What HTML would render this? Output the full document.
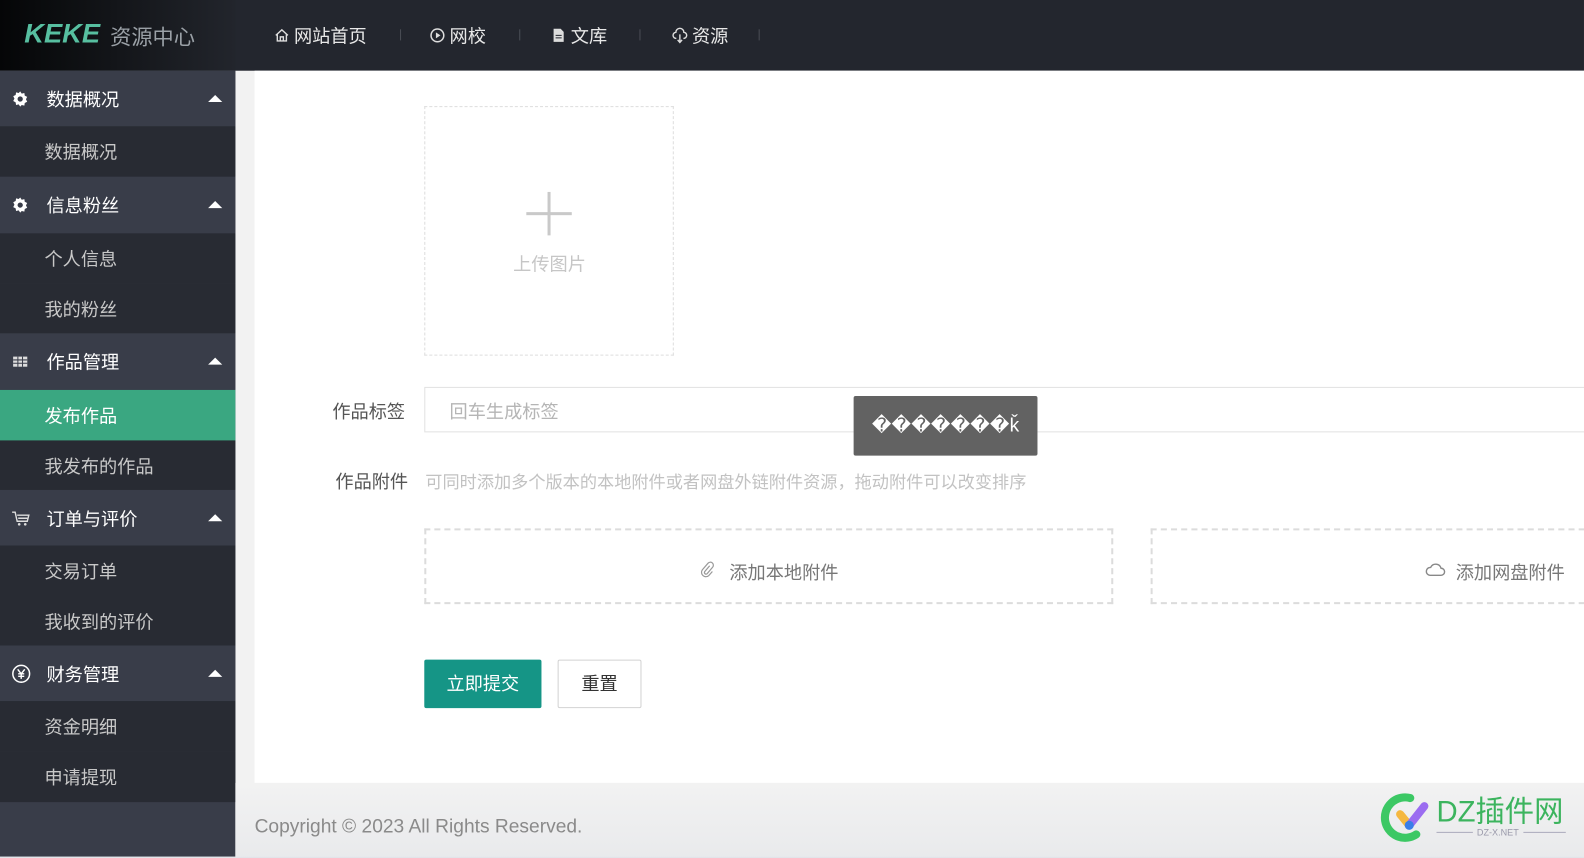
<!DOCTYPE html>
<html><head><meta charset="utf-8">
<style>
*{margin:0;padding:0;box-sizing:border-box}
html,body{width:1584px;height:857px;overflow:hidden;background:#dfe2e8}
body{font-family:"Liberation Sans","Noto Sans CJK SC",sans-serif}
#wrap{position:absolute;left:0;top:0;width:1568px;height:849px;transform:scale(1.0102);transform-origin:0 0;background:#f2f2f2;overflow:hidden}
.a{position:absolute}
#top{left:0;top:0;width:1568px;height:70px;background:#23262e}
#logo{left:0;top:0;width:233px;height:70px;background:linear-gradient(90deg,#050607,#22252c)}
.nav{top:22px;color:#e8e8e8;font-size:18px;display:flex;align-items:center;gap:4px}
.sep{top:29px;width:1px;height:11px;background:#4a4d55}
#side{left:0;top:70px;width:233px;height:778px;background:#393d49}
.h{position:absolute;left:0;width:233px;background:#393d49;color:#fff;font-size:18px}
.h span{position:absolute;left:46px;top:50%;transform:translateY(-50%)}
.h i{position:absolute;right:13px;top:50%;margin-top:-4px;width:0;height:0;border-left:7px solid transparent;border-right:7px solid transparent;border-bottom:7px solid #fff}
.h svg{position:absolute;left:11px;top:50%;transform:translateY(-50%)}
.it{position:absolute;left:0;width:233px;background:#282b33;color:#c8c8c8;font-size:18px}
.it span{position:absolute;left:44px;top:50%;transform:translateY(-50%)}
#card{left:252px;top:70px;width:1316px;height:705px;background:#fff}
#foot{left:233px;top:775px;width:1335px;height:73px;background:linear-gradient(#f2f2f2,#e9eaec)}
.lbl{color:#555;font-size:18px}
</style></head><body>
<div id="wrap">
<div class="a" id="top"></div>
<div class="a" id="logo">
 <div class="a" style="left:24px;top:18px;font:italic bold 27px 'Liberation Sans',sans-serif;color:#57bfa0">KEKE</div>
 <div class="a" style="left:109px;top:21px;font-size:21px;color:#9aa0a6">资源中心</div>
</div>
<div class="a nav" style="left:271px"><svg width="16" height="16" viewBox="0 0 16 16"><path d="M2 8L8 2.5 14 8M3.5 7v6.5h9V7M6.5 13.5v-4h3v4" fill="none" stroke="#ddd" stroke-width="1.4"/></svg>网站首页</div>
<div class="a sep" style="left:396px"></div>
<div class="a nav" style="left:425px"><svg width="16" height="16" viewBox="0 0 16 16"><circle cx="8" cy="8" r="6.3" fill="none" stroke="#ddd" stroke-width="1.5"/><path d="M6.5 5v6l4.5-3z" fill="#ddd"/></svg>网校</div>
<div class="a sep" style="left:514px"></div>
<div class="a nav" style="left:545px"><svg width="16" height="16" viewBox="0 0 16 16"><path d="M3 1.5h7l3 3v10H3z" fill="#ddd"/><path d="M5 8h6M5 10.5h6" stroke="#23262e"/></svg>文库</div>
<div class="a sep" style="left:633px"></div>
<div class="a nav" style="left:665px"><svg width="16" height="16" viewBox="0 0 16 16"><path d="M4.5 11a3 3 0 0 1-.5-6 4 4 0 0 1 8 0 3 3 0 0 1-.5 6M8 7v8M5.8 12.5L8 15l2.2-2.5" fill="none" stroke="#ddd" stroke-width="1.4"/></svg>资源</div>
<div class="a sep" style="left:751px"></div>

<div class="a" id="side">
 <div class="h" style="top:0;height:55px"><svg width="18" height="18" viewBox="0 0 18 18"><path d="M9 1.5l1.5 2.2 2.6-.6.4 2.6 2.4 1.2-1.2 2.4 1.2 2.4-2.4 1.2-.4 2.6-2.6-.6L9 16.5l-1.5-2.2-2.6.6-.4-2.6L2.1 11l1.2-2.4L2.1 6.2l2.4-1.2.4-2.6 2.6.6z" fill="#fff"/><circle cx="9" cy="9" r="2.6" fill="#393d49"/></svg><span>数据概况</span><i></i></div>
 <div class="it" style="top:55px;height:50px"><span>数据概况</span></div>
 <div class="h" style="top:105px;height:56px"><svg width="18" height="18" viewBox="0 0 18 18"><path d="M9 1.5l1.5 2.2 2.6-.6.4 2.6 2.4 1.2-1.2 2.4 1.2 2.4-2.4 1.2-.4 2.6-2.6-.6L9 16.5l-1.5-2.2-2.6.6-.4-2.6L2.1 11l1.2-2.4L2.1 6.2l2.4-1.2.4-2.6 2.6.6z" fill="#fff"/><circle cx="9" cy="9" r="2.6" fill="#393d49"/></svg><span>信息粉丝</span><i></i></div>
 <div class="it" style="top:161px;height:50px"><span>个人信息</span></div>
 <div class="it" style="top:211px;height:49px"><span>我的粉丝</span></div>
 <div class="h" style="top:260px;height:56px"><svg width="18" height="18" viewBox="0 0 18 18"><rect x="2" y="4" width="14" height="10" fill="#ddd"/><path d="M2 7.3h14M2 10.6h14M6.7 4v10M11.3 4v10" stroke="#393d49" stroke-width="1"/></svg><span>作品管理</span><i></i></div>
 <div class="it" style="top:316px;height:50px;background:#3aa781;color:#fff"><span>发布作品</span></div>
 <div class="it" style="top:366px;height:49px"><span>我发布的作品</span></div>
 <div class="h" style="top:415px;height:55px"><svg width="20" height="18" viewBox="0 0 20 18"><path d="M1 3h3l2 9h10l1.5-6H6M7 9h9" fill="none" stroke="#ddd" stroke-width="1.4"/><circle cx="8" cy="15" r="1.3" fill="#ddd"/><circle cx="14" cy="15" r="1.3" fill="#ddd"/></svg><span>订单与评价</span><i></i></div>
 <div class="it" style="top:470px;height:50px"><span>交易订单</span></div>
 <div class="it" style="top:520px;height:49px"><span>我收到的评价</span></div>
 <div class="h" style="top:569px;height:55px"><svg width="20" height="20" viewBox="0 0 20 20"><circle cx="10" cy="10" r="8.3" fill="none" stroke="#fff" stroke-width="1.5"/><path d="M6.5 5.5L10 10l3.5-4.5M10 10v5M7 10h6M7 12.5h6" fill="none" stroke="#fff" stroke-width="1.4"/></svg><span>财务管理</span><i></i></div>
 <div class="it" style="top:624px;height:50px"><span>资金明细</span></div>
 <div class="it" style="top:674px;height:50px"><span>申请提现</span></div>
</div>
<div class="a" style="left:0;top:848px;width:1568px;height:9px;background:#dfe2e8"></div>

<div class="a" id="card"></div>
<div class="a" style="left:420px;top:105px;width:247px;height:247px;border:1px dashed #ddd"></div>
<div class="a" style="left:521px;top:210px;width:45px;height:3px;background:#c9c9c9"></div>
<div class="a" style="left:542px;top:190px;width:3px;height:43px;background:#c9c9c9"></div>
<div class="a" style="left:508px;top:248px;font-size:18px;color:#c6c6c6">上传图片</div>

<div class="a lbl" style="left:329px;top:394px">作品标签</div>
<div class="a" style="left:420px;top:383px;width:1170px;height:45px;border:1px solid #e2e2e2"></div>
<div class="a" style="left:445px;top:394px;font-size:18px;color:#b5b5b5">回车生成标签</div>
<div class="a" style="left:845px;top:392px;width:182px;height:59px;background:#626262;border-radius:2px;color:#fff;font-size:19px;text-align:center;line-height:59px">�������ǩ</div>

<div class="a lbl" style="left:332px;top:463px">作品附件</div>
<div class="a" style="left:421px;top:463px;font-size:17px;color:#c2c2c2">可同时添加多个版本的本地附件或者网盘外链附件资源，拖动附件可以改变排序</div>

<div class="a" style="left:420px;top:523px;width:682px;height:75px;border:2px dashed #dcdcdc"></div>
<svg class="a" style="left:691px;top:555px" width="18" height="18" viewBox="0 0 18 18"><path d="M11.5 5l-5 6a1.6 1.6 0 0 0 2.4 2l5.5-6.5a3 3 0 0 0-4.5-4L4.3 9a4.3 4.3 0 0 0 6.4 5.7l3.5-4" fill="none" stroke="#999" stroke-width="1.2"/></svg>
<div class="a" style="left:722px;top:553px;font-size:18px;color:#777">添加本地附件</div>
<div class="a" style="left:1139px;top:523px;width:460px;height:75px;border:2px dashed #dcdcdc"></div>
<svg class="a" style="left:1410px;top:556px" width="22" height="16" viewBox="0 0 22 16"><path d="M5.5 13.5h11a3.5 3.5 0 0 0 0-7 5.5 5.5 0 0 0-10.3-.8A3.5 3.5 0 0 0 5.5 13.5z" fill="none" stroke="#888" stroke-width="1.4"/></svg>
<div class="a" style="left:1441px;top:553px;font-size:18px;color:#777">添加网盘附件</div>

<div class="a" style="left:420px;top:653px;width:116px;height:48px;background:#159586;border-radius:2px;color:#fff;font-size:18px;text-align:center;line-height:48px">立即提交</div>
<div class="a" style="left:552px;top:653px;width:83px;height:48px;border:1px solid #d2d2d2;border-radius:2px;background:#fff;color:#333;font-size:18px;text-align:center;line-height:46px">重置</div>

<div class="a" id="foot"></div>
<div class="a" style="left:252px;top:808px;font-size:19px;color:#8a8a8a">Copyright © 2023 All Rights Reserved.</div>

<svg class="a" style="left:1366px;top:780px" width="190" height="58" viewBox="0 0 190 58">
 <path d="M30 10A20 20 0 1 0 36 46" fill="none" stroke="#3cc864" stroke-width="8" stroke-linecap="round"/>
 <path d="M20 26l9 11" stroke="#f5b840" stroke-width="8" stroke-linecap="round"/>
 <path d="M29 37L44 18" stroke="#9b6cf0" stroke-width="8" stroke-linecap="round"/>
 <circle cx="29" cy="37" r="4.5" fill="#3a7ee8"/>
 <text x="56" y="33" font-family="Liberation Sans,Noto Sans CJK SC,sans-serif" font-size="29" fill="#3cb45e">DZ插件网</text>
 <line x1="56" y1="44" x2="92" y2="44" stroke="#aab" stroke-width="1"/>
 <text x="96" y="47" font-family="Liberation Sans,sans-serif" font-size="9" fill="#99a">DZ-X.NET</text>
 <line x1="142" y1="44" x2="184" y2="44" stroke="#aab" stroke-width="1"/>
</svg>
</div>
</body></html>
